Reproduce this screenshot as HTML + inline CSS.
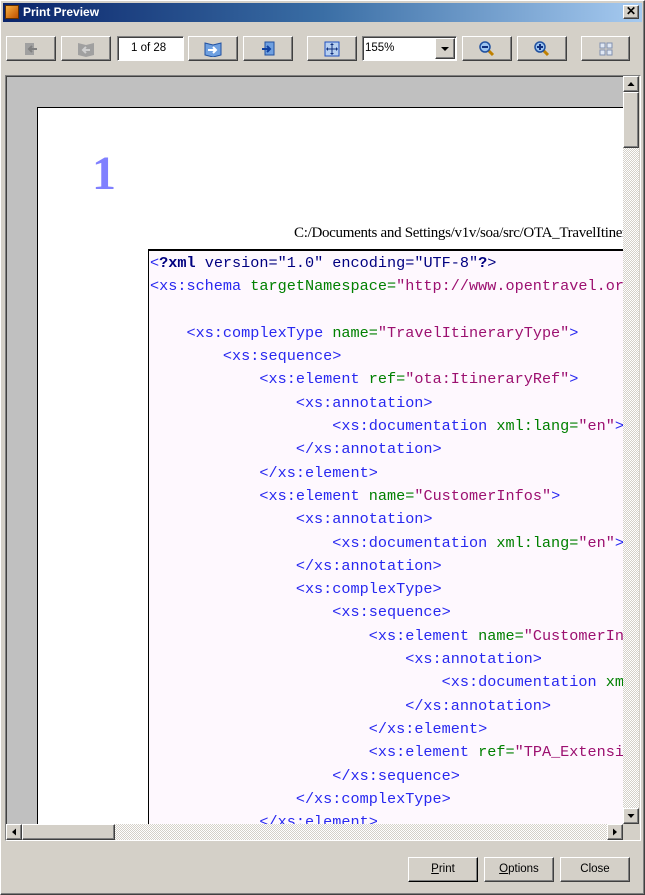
<!DOCTYPE html>
<html style="overflow:hidden;width:645px;height:895px"><head><meta charset="utf-8"><style>
*{margin:0;padding:0;box-sizing:border-box}
body{width:645px;height:895px;background:#d4d0c8;font-family:Tahoma,"Liberation Sans",sans-serif;font-size:11px;position:relative;overflow:hidden}
.a{position:absolute}
.win{left:0;top:0;width:645px;height:895px;border:1px solid #fff;border-right-color:#404040;border-bottom-color:#404040;box-shadow:inset -1px -1px #808080}
.title{left:3px;top:3px;width:639px;height:19px;background:linear-gradient(90deg,#0a246a,#3a6ea5 50%,#a6caf0)}
.title span{position:absolute;left:20px;top:2px;color:#fff;font-weight:bold;font-family:"Liberation Sans",sans-serif;font-size:12px}
.btn{position:absolute;background:#d4d0c8;border:1px solid;border-color:#fff #404040 #404040 #fff;box-shadow:inset -1px -1px #808080}
.tb{top:36px;height:25px}
.ic{position:absolute;left:50%;top:50%;transform:translate(-50%,-50%)}
.code{font-family:"Liberation Mono",monospace;font-size:15.2px;white-space:pre;line-height:23.3px;overflow:hidden}
.t{color:#2828f0}.n{color:#008000}.v{color:#9c1070}.d{color:#000080}
.chk{background-color:#ece9e2;background-image:repeating-conic-gradient(#fff 0 25%,#d4d0c8 0 50%);background-size:2px 2px}
.bb{top:857px;height:25px;width:70px;font-family:"Liberation Sans",sans-serif;font-size:11.5px;text-align:center;line-height:23px}
</style></head><body>
<div class="a win"></div>
<div class="a title"><div class="a" style="left:2px;top:2px;width:14px;height:14px;background:linear-gradient(135deg,#f7b040,#c05000);border:1px solid #603000"></div><span>Print Preview</span>
<div class="btn" style="left:620px;top:2px;width:16px;height:14px;font-size:12px;line-height:11px;text-align:center;font-weight:bold;color:#000">✕</div></div>

<div class="btn tb" style="left:6px;width:50px"><svg class="ic" width="16" height="16"><rect x="2" y="2" width="9" height="12" fill="#a0a0a0"/><path d="M6 8h8M9 5l-3 3 3 3" stroke="#808080" stroke-width="2" fill="none"/></svg></div>
<div class="btn tb" style="left:61px;width:50px"><svg class="ic" width="18" height="16"><path d="M1 2l8 2 8-2v12l-8 2-8-2z" fill="#a0a0a0"/><path d="M6 9h7M9 6l-3 3 3 3" stroke="#d0d0d0" stroke-width="2" fill="none"/></svg></div>
<div class="a" style="left:117px;top:36px;width:67px;height:25px;background:#fff;border:1px solid;border-color:#808080 #fff #fff #808080;box-shadow:inset 1px 1px #404040;font-family:'Liberation Sans',sans-serif;font-size:11.5px;padding:5px 0 0 13px">1 of 28</div>
<div class="btn tb" style="left:188px;width:50px"><svg class="ic" width="18" height="16"><path d="M1 2l8 2 8-2v12l-8 2-8-2z" fill="#6fa0e0" stroke="#2050a0"/><path d="M4 9h8M9 6l3 3-3 3" stroke="#fff" stroke-width="2" fill="none"/></svg></div>
<div class="btn tb" style="left:243px;width:50px"><svg class="ic" width="16" height="16"><rect x="5" y="1" width="9" height="13" fill="#6fa0e0" stroke="#2050a0"/><path d="M2 8h8M7 5l3 3-3 3" stroke="#1040a0" stroke-width="2" fill="none"/></svg></div>
<div class="btn tb" style="left:307px;width:50px"><svg class="ic" width="16" height="16"><rect x="1" y="1" width="14" height="14" fill="#b8d0f0" stroke="#2050c0"/><path d="M8 3v10M3 8h10" stroke="#103080"/><path d="M8 2l-2 2h4zM8 14l-2-2h4zM2 8l2-2v4zM14 8l-2-2v4z" fill="#103080"/></svg></div>
<div class="a" style="left:362px;top:36px;width:95px;height:25px;background:#fff;border:1px solid;border-color:#808080 #fff #fff #808080;box-shadow:inset 1px 1px #404040;font-family:'Liberation Sans',sans-serif;font-size:11.5px;padding:5px 0 0 2px">155%
<div class="btn" style="left:72px;top:1px;width:20px;height:21px"><svg class="ic" width="8" height="4"><path d="M0 0h8l-4 4z"/></svg></div></div>
<div class="btn tb" style="left:462px;width:50px"><svg class="ic" width="16" height="16"><path d="M9 9l5 5" stroke="#c08000" stroke-width="3"/><circle cx="6" cy="6" r="5" fill="#9cc4f0" stroke="#2050a0" stroke-width="1.5"/><path d="M3 6h6" stroke="#103080" stroke-width="2"/></svg></div>
<div class="btn tb" style="left:517px;width:50px"><svg class="ic" width="16" height="16"><path d="M9 9l5 5" stroke="#c08000" stroke-width="3"/><circle cx="6" cy="6" r="5" fill="#9cc4f0" stroke="#2050a0" stroke-width="1.5"/><path d="M3 6h6M6 3v6" stroke="#103080" stroke-width="2"/></svg></div>
<div class="btn tb" style="left:581px;width:49px"><svg class="ic" width="14" height="14"><g fill="#e0e8f4" stroke="#8090b0"><rect x="1" y="1" width="5" height="5"/><rect x="8" y="1" width="5" height="5"/><rect x="1" y="8" width="5" height="5"/><rect x="8" y="8" width="5" height="5"/></g></svg></div>

<div class="a" style="left:5px;top:75px;width:636px;height:766px;border:1px solid;border-color:#808080 #fff #fff #808080"></div>
<div class="a" style="left:6px;top:76px;width:617px;height:748px;background:#c0c0c0;overflow:hidden;border-top:1px solid #404040;border-left:1px solid #404040">
 <div class="a" style="left:30px;top:30px;width:700px;height:800px;background:#fff;border:1px solid #000;border-right:none;overflow:hidden">
  <div class="a" style="left:54px;top:38px;font-family:'Liberation Serif',serif;font-size:48px;font-weight:bold;color:#8080ff">1</div>
  <div class="a" style="left:256px;top:117px;font-family:'Liberation Serif',serif;font-size:15px;white-space:nowrap;letter-spacing:-0.3px">C:/Documents and Settings/v1v/soa/src/OTA_TravelItinerary</div>
  <div class="a code" style="left:110px;top:141px;width:600px;height:700px;background:#fef8fe;border:1px solid #000;border-top-width:2px;padding:1px 0 0 1px"><span class="t">&lt;</span><span class="d"><b>?xml</b> version="1.0" encoding="UTF-8"<b>?</b>&gt;</span>
<span class="t">&lt;xs:schema</span> <span class="n">targetNamespace=</span><span class="v">"http://www.opentravel.org/OTA/2003/05"</span>

    <span class="t">&lt;xs:complexType</span> <span class="n">name=</span><span class="v">"TravelItineraryType"</span><span class="t">&gt;</span>
        <span class="t">&lt;xs:sequence&gt;</span>
            <span class="t">&lt;xs:element</span> <span class="n">ref=</span><span class="v">"ota:ItineraryRef"</span><span class="t">&gt;</span>
                <span class="t">&lt;xs:annotation&gt;</span>
                    <span class="t">&lt;xs:documentation</span> <span class="n">xml:lang=</span><span class="v">"en"</span><span class="t">&gt;</span>
                <span class="t">&lt;/xs:annotation&gt;</span>
            <span class="t">&lt;/xs:element&gt;</span>
            <span class="t">&lt;xs:element</span> <span class="n">name=</span><span class="v">"CustomerInfos"</span><span class="t">&gt;</span>
                <span class="t">&lt;xs:annotation&gt;</span>
                    <span class="t">&lt;xs:documentation</span> <span class="n">xml:lang=</span><span class="v">"en"</span><span class="t">&gt;</span>
                <span class="t">&lt;/xs:annotation&gt;</span>
                <span class="t">&lt;xs:complexType&gt;</span>
                    <span class="t">&lt;xs:sequence&gt;</span>
                        <span class="t">&lt;xs:element</span> <span class="n">name=</span><span class="v">"CustomerInfo"</span><span class="t">&gt;</span>
                            <span class="t">&lt;xs:annotation&gt;</span>
                                <span class="t">&lt;xs:documentation</span> <span class="n">xml:lang=</span><span class="v">"en"</span>
                            <span class="t">&lt;/xs:annotation&gt;</span>
                        <span class="t">&lt;/xs:element&gt;</span>
                        <span class="t">&lt;xs:element</span> <span class="n">ref=</span><span class="v">"TPA_Extensions"</span>
                    <span class="t">&lt;/xs:sequence&gt;</span>
                <span class="t">&lt;/xs:complexType&gt;</span>
            <span class="t">&lt;/xs:element&gt;</span></div>
 </div>
</div>
<div class="a chk" style="left:623px;top:76px;width:16px;height:748px"></div>
<div class="btn" style="left:623px;top:76px;width:16px;height:16px"><svg class="ic" width="7" height="4"><path d="M0 4h7L3.5 0z"/></svg></div>
<div class="btn" style="left:623px;top:92px;width:16px;height:56px"></div>
<div class="btn" style="left:623px;top:808px;width:16px;height:16px"><svg class="ic" width="7" height="4"><path d="M0 0h7L3.5 4z"/></svg></div>
<div class="a chk" style="left:6px;top:824px;width:617px;height:16px"></div>
<div class="btn" style="left:6px;top:824px;width:16px;height:16px"><svg class="ic" width="4" height="7"><path d="M4 0v7L0 3.5z"/></svg></div>
<div class="btn" style="left:22px;top:824px;width:93px;height:16px"></div>
<div class="btn" style="left:607px;top:824px;width:16px;height:16px"><svg class="ic" width="4" height="7"><path d="M0 0v7L4 3.5z"/></svg></div>

<div class="btn bb" style="left:408px;border-color:#fff #000 #000 #fff"><u>P</u>rint</div>
<div class="btn bb" style="left:484px"><u>O</u>ptions</div>
<div class="btn bb" style="left:560px">Close</div>
</body></html>
